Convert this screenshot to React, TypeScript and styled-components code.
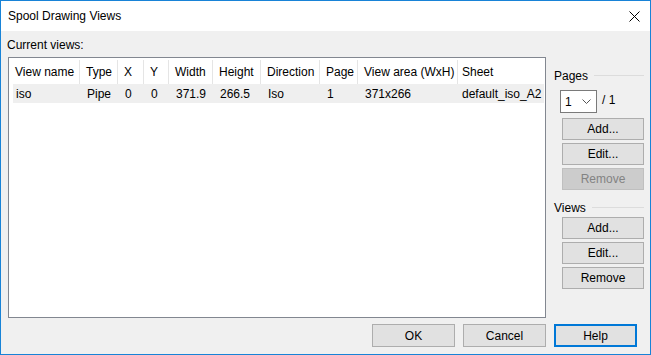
import React from "react";
import styled, { createGlobalStyle } from "styled-components";

const Global = createGlobalStyle`
  html, body {
    margin: 0;
    padding: 0;
    background: #ffffff;
  }
  body {
    font-family: "Segoe UI", "Liberation Sans", Arial, sans-serif;
    font-size: 12px;
    color: #000000;
  }
`

const Window = styled.div`
  width: 651px;
  height: 355px;
  box-sizing: border-box;
  border: 1px solid #1883d7;
  background: #f0f0f0;
  display: flex;
  flex-direction: column;
`

const TitleBar = styled.div`
  height: 30px;
  flex: none;
  background: #ffffff;
  display: flex;
  align-items: center;
  justify-content: space-between;
  padding: 0 10px 0 7px;
  .title{
    line-height: 16px;
  }
`

const Body = styled.div`
  flex: 1;
  display: flex;
  flex-direction: column;
  padding: 6px 6px 7px 7px;
`

const Main = styled.div`
  display: flex;
  align-items: flex-start;
`

const LeftColumn = styled.div`
  flex: none;
  width: 538px;
  display: flex;
  flex-direction: column;
  .label{
    height: 16px;
    line-height: 16px;
    margin: 0 0 4px -1px;
  }
`

const ListBox = styled.div`
  height: 261px;
  box-sizing: border-box;
  border: 1px solid #828790;
  background: #ffffff;
  overflow: hidden;
`

const HeaderRow = styled.div<{ $cols: string }>`
  display: grid;
  grid-template-columns: ${p => p.$cols};
  height: 26px;
`

const HeaderCell = styled.div`
  border-right: 1px solid #e5e5e5;
  margin: 2px 0 0;
  padding-left: 6px;
  display: flex;
  align-items: center;
  white-space: nowrap;
  &:last-child{
    border-right: none;
    padding-left: 4px;
  }
`

const DataRow = styled.div<{ $cols: string }>`
  display: grid;
  grid-template-columns: ${p => p.$cols};
  height: 19px;
  margin: 0 1px 0 4px;
  background: #efefef;
`

const DataCell = styled.div<{ $first?: boolean }>`
  padding-left: ${p => (p.$first ? 3 : 7)}px;
  display: flex;
  align-items: center;
  white-space: nowrap;
  &:last-child{
    padding-left: 4px;
  }
`

const RightColumn = styled.div`
  flex: none;
  width: 90px;
  margin-left: 8px;
  padding-top: 31px;
  display: flex;
  flex-direction: column;
`

const GroupHeader = styled.div<{ $top: number }>`
  display: flex;
  align-items: center;
  height: 15px;
  margin-top: ${p => p.$top}px;
  span{
    margin-right: 6px;
  }
  &::after{
    content: "";
    flex: 1;
    height: 1px;
    background: #dcdcdc;
  }
`

const PageRow = styled.div`
  display: flex;
  align-items: flex-start;
  margin: 7px 0 0 6px;
  .of{
    margin: 3px 0 0 5px;
    line-height: 14px;
  }
`

const Combo = styled.div`
  width: 37px;
  height: 23px;
  box-sizing: border-box;
  border: 1px solid #7a7a7a;
  background: #ffffff;
  display: flex;
  align-items: center;
  justify-content: space-between;
  padding: 0 5px 0 4px;
`

const SideButtons = styled.div<{ $top: number }>`
  display: flex;
  flex-direction: column;
  gap: 3px;
  margin: ${p => p.$top}px 0 0 8px;
`

const Button = styled.button<{ $w: number; $h: number; $primary?: boolean }>`
  width: ${p => p.$w}px;
  height: ${p => p.$h}px;
  box-sizing: border-box;
  margin: 0;
  padding: 0;
  font: inherit;
  color: #000000;
  background: #e1e1e1;
  border: ${p => (p.$primary ? "2px solid #0078d7" : "1px solid #adadad")};
  &:disabled{
    color: #838383;
    background: #cccccc;
    border-color: #bfbfbf;
  }
`

const Footer = styled.div`
  display: flex;
  justify-content: flex-end;
  gap: 8px;
  margin-top: 6px;
  padding-right: 7px;
`

const columns: { name: string, width: number }[] = [
  { name: "View name", width: 71 },
  { name: "Type", width: 38 },
  { name: "X", width: 26 },
  { name: "Y", width: 25 },
  { name: "Width", width: 44 },
  { name: "Height", width: 48 },
  { name: "Direction", width: 59 },
  { name: "Page", width: 38 },
  { name: "View area (WxH)", width: 100 },
  { name: "Sheet", width: 0 },
]

const rows: string[][] = [
  ["iso", "Pipe", "0", "0", "371.9", "266.5", "Iso", "1", "371x266", "default_iso_A2"],
]

const colTemplate = (shift: number) =>
  columns.map((c, i) => (c.width ? `${c.width - (i === 0 ? shift : 0)}px` : "1fr")).join(" ")

function CloseIcon() {
  return (
    <svg width="11" height="11" viewBox="0 0 11 11">
      <path d="M0.5 0.5 L10.5 10.5 M10.5 0.5 L0.5 10.5" stroke="#000" strokeWidth="1" fill="none" />
    </svg>
  )
}

function Chevron() {
  return (
    <svg width="9" height="5" viewBox="0 0 9 5">
      <path d="M0.5 0.5 L4.5 4.5 L8.5 0.5" stroke="#555" strokeWidth="1" fill="none" />
    </svg>
  )
}

function App() {
  return (
    <>
      <Global />
      <Window>
        <TitleBar>
          <span className="title">Spool Drawing Views</span>
          <CloseIcon />
        </TitleBar>
        <Body>
          <Main>
            <LeftColumn>
              <div className="label">Current views:</div>
              <ListBox>
                <HeaderRow $cols={colTemplate(0)}>
                  {columns.map(c => <HeaderCell key={c.name}>{c.name}</HeaderCell>)}
                </HeaderRow>
                {rows.map(r => (
                  <DataRow $cols={colTemplate(4)} key={r[0]}>
                    {r.map((v, i) => <DataCell $first={i === 0} key={i}>{v}</DataCell>)}
                  </DataRow>
                ))}
              </ListBox>
            </LeftColumn>
            <RightColumn>
              <GroupHeader $top={0}><span>Pages</span></GroupHeader>
              <PageRow>
                <Combo><span>1</span><Chevron /></Combo>
                <span className="of">/ 1</span>
              </PageRow>
              <SideButtons $top={5}>
                <Button $w={82} $h={22}>Add...</Button>
                <Button $w={82} $h={22}>Edit...</Button>
                <Button $w={82} $h={22} disabled>Remove</Button>
              </SideButtons>
              <GroupHeader $top={10}><span>Views</span></GroupHeader>
              <SideButtons $top={2}>
                <Button $w={82} $h={22}>Add...</Button>
                <Button $w={82} $h={22}>Edit...</Button>
                <Button $w={82} $h={22}>Remove</Button>
              </SideButtons>
            </RightColumn>
          </Main>
          <Footer>
            <Button $w={83} $h={23}>OK</Button>
            <Button $w={83} $h={23}>Cancel</Button>
            <Button $w={83} $h={23} $primary>Help</Button>
          </Footer>
        </Body>
      </Window>
    </>
  )
}

export default App
